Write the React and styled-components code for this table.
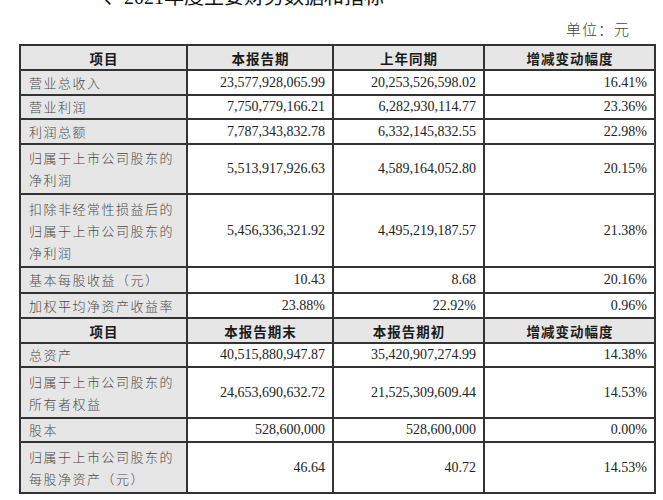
import React from 'react';
import styled, { createGlobalStyle } from 'styled-components';

const GlobalStyle = createGlobalStyle`
  html, body {
    margin: 0;
    padding: 0;
    background: #ffffff;
  }
  body {
    font-family: "Liberation Serif", "Noto Sans CJK SC", serif;
  }
`;

const Page = styled.div`
  width: 635px;
  padding: 0 9px 0 19px;
  overflow: hidden;
  height: 500px;
`;

const Title = styled.div`
  margin: -13px 0 0 85px;
  font-family: "Liberation Serif", "Noto Sans CJK SC", serif;
  font-size: 20px;
  line-height: 20px;
  color: #111;
  white-space: nowrap;
`;

const Unit = styled.div`
  padding: 14px 24px 7px 0;
  text-align: right;
  font-family: "Noto Sans CJK SC", sans-serif;
  font-weight: 300;
  font-size: 15px;
  line-height: 16px;
  letter-spacing: 1px;
  color: #444;
`;

const Table = styled.table`
  width: 635px;
  border-collapse: collapse;
  table-layout: fixed;
`;

const Row = styled.tr`
  height: ${(p) => p.$h}px;
`;

const cellBase = `
  border: 2px solid #333;
  padding: 0 7px 0 8px;
  vertical-align: middle;
  overflow: hidden;
`;

const HeadCell = styled.th`
  ${cellBase}
  background: #e6e6e6;
  text-align: center;
  font-family: "Noto Sans CJK SC", sans-serif;
  font-weight: 700;
  font-size: 13.5px;
  letter-spacing: 1px;
  color: #1a1a1a;
`;

const LabelCell = styled.td`
  ${cellBase}
  background: #e6e6e6;
  text-align: left;
  font-family: "Noto Sans CJK SC", sans-serif;
  font-weight: 300;
  font-size: 13px;
  line-height: 22px;
  letter-spacing: 1.5px;
  color: #4a4a4a;
  white-space: nowrap;
`;

const Line = styled.span`
  display: block;
`;

const NumCell = styled.td`
  ${cellBase}
  background: #ffffff;
  text-align: right;
  font-family: "Liberation Serif", "Noto Sans CJK SC", serif;
  font-size: 14px;
  color: #222;
  white-space: nowrap;
`;

const widths = [167, 146, 151, 171];

const sections = [
  {
    head: ['项目', '本报告期', '上年同期', '增减变动幅度'],
    headH: 25,
    rows: [
      { label: ['营业总收入'], h: 25, v: ['23,577,928,065.99', '20,253,526,598.02', '16.41%'] },
      { label: ['营业利润'], h: 24, v: ['7,750,779,166.21', '6,282,930,114.77', '23.36%'] },
      { label: ['利润总额'], h: 25, v: ['7,787,343,832.78', '6,332,145,832.55', '22.98%'] },
      { label: ['归属于上市公司股东的', '净利润'], h: 50, v: ['5,513,917,926.63', '4,589,164,052.80', '20.15%'] },
      {
        label: ['扣除非经常性损益后的', '归属于上市公司股东的', '净利润'],
        h: 73,
        v: ['5,456,336,321.92', '4,495,219,187.57', '21.38%'],
      },
      { label: ['基本每股收益（元）'], h: 26, v: ['10.43', '8.68', '20.16%'] },
      { label: ['加权平均净资产收益率'], h: 25, v: ['23.88%', '22.92%', '0.96%'] },
    ],
  },
  {
    head: ['项目', '本报告期末', '本报告期初', '增减变动幅度'],
    headH: 25,
    rows: [
      { label: ['总资产'], h: 24, v: ['40,515,880,947.87', '35,420,907,274.99', '14.38%'] },
      { label: ['归属于上市公司股东的', '所有者权益'], h: 51, v: ['24,653,690,632.72', '21,525,309,609.44', '14.53%'] },
      { label: ['股本'], h: 24, v: ['528,600,000', '528,600,000', '0.00%'] },
      { label: ['归属于上市公司股东的', '每股净资产（元）'], h: 51, v: ['46.64', '40.72', '14.53%'] },
    ],
  },
];

export default function App() {
  return (
    <>
      <GlobalStyle />
      <Page>
        <Title>、2021年度主要财务数据和指标</Title>
        <Unit>单位：元</Unit>
        <Table>
          <colgroup>
            {widths.map((w, i) => (
              <col key={i} style={{ width: w }} />
            ))}
          </colgroup>
          <tbody>
            {sections.map((s, si) => (
              <React.Fragment key={si}>
                <Row $h={s.headH}>
                  {s.head.map((t) => (
                    <HeadCell key={t}>{t}</HeadCell>
                  ))}
                </Row>
                {s.rows.map((r, ri) => (
                  <Row key={ri} $h={r.h}>
                    <LabelCell>
                      {r.label.map((l) => (
                        <Line key={l}>{l}</Line>
                      ))}
                    </LabelCell>
                    {r.v.map((v, vi) => (
                      <NumCell key={vi}>{v}</NumCell>
                    ))}
                  </Row>
                ))}
              </React.Fragment>
            ))}
          </tbody>
        </Table>
      </Page>
    </>
  );
}
